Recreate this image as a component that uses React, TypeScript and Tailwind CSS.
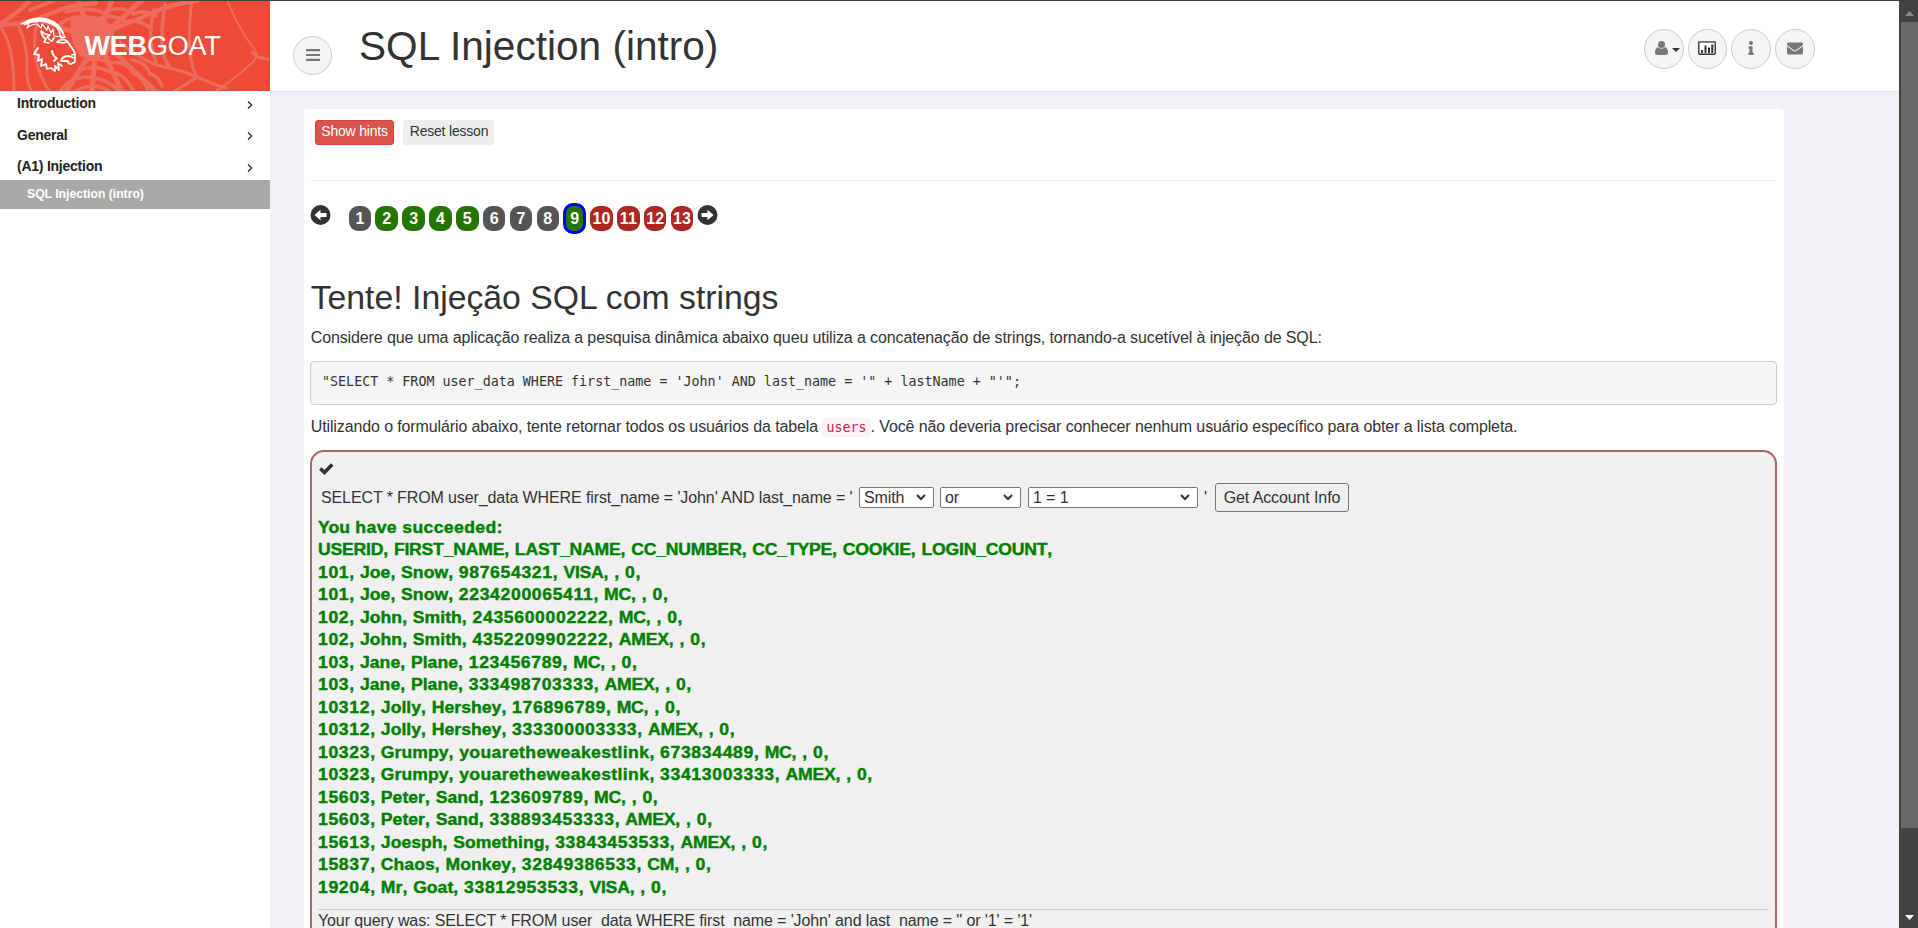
import { FaInfo, FaEnvelope } from 'react-icons/fa';

const menu = [
  { label: 'Introduction', row: 'h-[32px]', chevron: 'mt-[10px]' },
  { label: 'General', row: 'h-[31px]', chevron: 'mt-[9px]' },
  { label: '(A1) Injection', row: 'h-[26px]', chevron: 'mt-[10px]' },
];

const GREEN = 'h-[25px] rounded-[9px] leading-[25px] bg-[#257404]';
const GREY = 'h-[25px] rounded-[9px] leading-[25px] bg-[#555555]';
const RED = 'h-[25px] rounded-[9px] leading-[25px] bg-[#ae2823]';
const CURRENT = '-mt-[3px] h-[31px] rounded-[10px] border-3 border-[#0000ff] leading-[25px] bg-[#257404]';
const pages = [
  { n: 1, c: GREY }, { n: 2, c: GREEN }, { n: 3, c: GREEN }, { n: 4, c: GREEN }, { n: 5, c: GREEN },
  { n: 6, c: GREY }, { n: 7, c: GREY }, { n: 8, c: GREY }, { n: 9, c: CURRENT },
  { n: 10, c: RED }, { n: 11, c: RED }, { n: 12, c: RED }, { n: 13, c: RED },
];

const rows = [
  'You have succeeded:',
  'USERID, FIRST_NAME, LAST_NAME, CC_NUMBER, CC_TYPE, COOKIE, LOGIN_COUNT,',
  '101, Joe, Snow, 987654321, VISA, , 0,',
  '101, Joe, Snow, 2234200065411, MC, , 0,',
  '102, John, Smith, 2435600002222, MC, , 0,',
  '102, John, Smith, 4352209902222, AMEX, , 0,',
  '103, Jane, Plane, 123456789, MC, , 0,',
  '103, Jane, Plane, 333498703333, AMEX, , 0,',
  '10312, Jolly, Hershey, 176896789, MC, , 0,',
  '10312, Jolly, Hershey, 333300003333, AMEX, , 0,',
  '10323, Grumpy, youaretheweakestlink, 673834489, MC, , 0,',
  '10323, Grumpy, youaretheweakestlink, 33413003333, AMEX, , 0,',
  '15603, Peter, Sand, 123609789, MC, , 0,',
  '15603, Peter, Sand, 338893453333, AMEX, , 0,',
  '15613, Joesph, Something, 33843453533, AMEX, , 0,',
  '15837, Chaos, Monkey, 32849386533, CM, , 0,',
  '19204, Mr, Goat, 33812953533, VISA, , 0,',
];

function tracking(token: string) {
  if (/^\d/.test(token)) return 'tracking-[0.58px]';
  if (/^[a-z]/.test(token)) return 'tracking-[0.33px]';
  if (/^[A-Z][a-z]/.test(token)) return 'tracking-[0.02px]';
  if (/^[A-Z]/.test(token)) return 'tracking-[-0.2px]';
  return 'tracking-[0.42px]';
}

function ResultRow({ text }: { text: string }) {
  const tokens = text.match(/[A-Z_]+(?![a-z])|\w+|\W+/g) ?? [];
  return (
    <div className="origin-left scale-x-110 whitespace-pre">
      {tokens.map((t, i) => <span key={i} className={tracking(t)}>{t}</span>)}
    </div>
  );
}

function Web() {
  return (
    <svg className="absolute inset-0" width="270" height="90" viewBox="0 1 270 90" fill="none" stroke="#ef6b5c" strokeLinecap="round">
      <path d="M227 0Q239 30 255 50Q259 56 252 63Q236 78 213 93" strokeWidth="2" />
      <path d="M252 52Q258 59 270 59M120 42Q140 60 160 66Q185 71 197 77Q212 84 226 88M197 77L172 93" strokeWidth="3.2" />
      <path d="M192 0Q188 30 190 52Q191 66 197 77" strokeWidth="3" />
      <path d="M165 4Q161 30 162 45Q163 58 170 68M154 10Q150 25 151 40Q152 52 156 63" strokeWidth="3.6" />
      <path d="M0 25Q30 24 52 13Q70 5 96 3M0 24Q22 10 30 0M96 36L150 14Q168 5 198 0" strokeWidth="4.4" />
      <path d="M1 28Q14 45 14 92M18 25Q28 46 27 66Q26 82 32 92M38 20Q32 40 36 60Q40 78 50 92" strokeWidth="3" />
      <path d="M60 92Q68 78 86 77Q108 78 120 92M74 92Q84 86 96 86Q106 88 110 92M80 70Q96 64 110 72Q124 72 134 92M86 60Q98 57 110 63Q126 60 134 74Q142 76 148 90M132 60Q146 62 150 74Q158 76 162 86" strokeWidth="3.4" />
      <path d="M30 10Q46 4 60 -2M60 24Q76 12 96 20Q112 12 126 22Q138 18 150 28M66 12Q90 6 104 13Q120 4 134 14Q146 9 156 16" strokeWidth="3.6" />
      <path d="M92 40L78 0M96 40L112 0M98 40L142 0M96 40L40 20M96 44L92 92M96 44L66 92M100 44L122 92M104 42L156 92" strokeWidth="5" />
      <path d="M72 16Q100 12 112 26Q118 40 108 54Q94 62 80 56Q66 36 72 16Z" fill="#ef6b5c" stroke="none" />
    </svg>
  );
}

function Goat() {
  return (
    <svg className="absolute left-[20px] top-[16px]" width="58" height="58" viewBox="20 17 58 58" fill="none" stroke="#fff" strokeLinecap="round" strokeLinejoin="round">
      <path d="M21 24Q34 15 48 19Q62 23 65 38Q61 29 53 25Q44 20 35 22Q28 23 21 24Z" fill="#fff" strokeWidth=".8" />
      <path d="M24 25L29 23L27 28Q32 24 37 24L41 28L42 24L47 30L48 26L51 33L53 29L54 36Q59 37 62 36" strokeWidth="1.2" />
      <path d="M54 24Q60 30 61 38L65 37" strokeWidth="1.6" />
      <path d="M41 31L45 34L50 35L47 37L51 41M41 31Q42 37 46 39L44 42L49 43M54 38L52 41" strokeWidth="1.6" />
      <path d="M57 42Q62 38 67 41L74 51L75 54L72 55M75 54L75 62L71 64M57 42L63 43L67 42" strokeWidth="1.7" />
      <path d="M71 64Q68 64 68 61L61 61Q62 56 69 56L74 58" strokeWidth="1.8" />
      <path d="M38 48L34 54L39 55L38 61L42 59L41 66L46 64L47 69L51 68L55 71L55 66L59 70L58 63L62 66" strokeWidth="1.8" />
      <path d="M52 51Q53 57 57 58L54 61" strokeWidth="1.8" />
    </svg>
  );
}

function CircleArrow({ flip = false }: { flip?: boolean }) {
  return (
    <svg width="21" height="20" viewBox="0 0 21 20" className={flip ? 'rotate-180' : ''}>
      <circle cx="10.500" cy="10" r="10" fill="#333" />
      <path d="M4.500 10L10.500 4.800V8H16.500V12H10.500V15.200Z" fill="#fff" />
    </svg>
  );
}

function Select({ label, className }: { label: string; className: string }) {
  return (
    <div className={'flex h-[21px] items-center justify-between rounded-[2px] border border-[#767676] bg-white pl-[4px] pr-[7px] text-[16px] leading-[19px] ' + className}>
      <span>{label}</span>
      <svg width="10" height="7" viewBox="0 0 10 7" fill="none" stroke="#333" strokeWidth="2"><path d="M1 1l4 4 4-4" /></svg>
    </div>
  );
}

const round = 'relative flex items-center justify-center rounded-full border border-[#cccccc] bg-[#f5f5f5] pb-[2px] text-[#777777]';

export default function App() {
  return (
    <div className="flex h-[928px] w-[1918px] overflow-hidden border-t border-[#404040] bg-[#f0f1f7] font-['Liberation_Sans',Arial,sans-serif] text-[16px] text-[#333333]">
      <aside className="w-[270px] shrink-0 bg-white">
        <div className="relative h-[90px] overflow-hidden bg-[#ed4b38]">
          <Web />
          <Goat />
          <div className="relative pl-[84.500px] pt-[29px] text-[27px] leading-[32px] tracking-[-0.2px] text-white"><b>WEB</b>GOAT</div>
        </div>
        <nav className="text-[14px] tracking-[-0.24px] font-bold text-[#222222]">
          {menu.map((m) => (
            <div key={m.label} className={'flex items-start justify-between pl-[17px] pr-[17px] leading-[25px] ' + m.row}>
              <span>{m.label}</span>
              <svg className={m.chevron} width="6" height="8" viewBox="0 0 6 8" fill="none" stroke="#222" strokeWidth="1.2"><path d="M1 .5L4.700 4L1 7.500" /></svg>
            </div>
          ))}
        </nav>
        <div className="h-[29px] bg-[#a9a9a9] pl-[27px] text-[12.200px] leading-[28px] font-bold text-white">SQL Injection (intro)</div>
      </aside>

      <div className="flex w-[1629px] shrink-0 flex-col">
        <header className="flex h-[91px] shrink-0 items-start border-b border-[#e4e5ea] bg-white pl-[23px]">
          <div className={round + ' mt-[35px] h-[39px] w-[39px]'}>
            <svg width="14" height="12" viewBox="0 0 14 12" fill="#777"><path d="M0 0h14v2.200H0zM0 4.900h14v2.200H0zM0 9.800h14v2.200H0z" /></svg>
          </div>
          <h1 className="ml-[27px] mt-[21px] w-[1285px] text-[40.600px] leading-[48px]">SQL Injection (intro)</h1>
          <div className="mt-[28px] flex gap-[4.200px]">
            <div className={round + ' h-10 w-[39.500px]'}>
              <svg className="mr-[4px]" width="13" height="14" viewBox="0 0 13 14" fill="#777"><circle cx="6.500" cy="3.500" r="3.500" /><path d="M3 6.300Q6.500 9 10 6.300Q13 7 13 12Q13 14 10.800 14H2.200Q0 14 0 12Q0 7 3 6.300Z" /></svg>
              <svg className="absolute right-[2.500px] top-[17.500px]" width="8" height="4" viewBox="0 0 8 4"><path d="M0 0h8L4 4z" fill="#333" /></svg>
            </div>
            <div className={round + ' h-10 w-[39.500px]'}>
              <svg width="18" height="14" viewBox="0 0 18 14"><rect x=".75" y=".75" width="16.500" height="12.500" rx="1" fill="#fff" stroke="#333" strokeWidth="1.400" /><path d="M.5 .8H17.500" stroke="#777" strokeWidth="1.500" /><path d="M4 12V9M7.500 12V4.500M11 12V6.500M14.300 12V3.500" stroke="#333" strokeWidth="2" /></svg>
            </div>
            <div className={round + ' h-10 w-[39.500px]'}><FaInfo className="h-[14px] w-[8px]" /></div>
            <div className={round + ' h-10 w-[39.500px]'}><FaEnvelope className="h-[17px] w-[16px]" /></div>
          </div>
        </header>

        <main className="ml-[34px] mt-[17px] h-[830px] w-[1480px] rounded-t-[4px] bg-white pl-[6px] pr-[7px]">
          <div className="flex h-[72px] gap-[9px] rounded-b-[4px] border-b border-[#eeeeee] pl-[5px] pt-[11px] text-[14px] tracking-[-0.2px]">
            <div className="h-[25px] w-[79px] rounded-[3px] border border-[#d43f3a] bg-[#d9534f] text-center leading-[21px] text-white">Show hints</div>
            <div className="h-[25px] w-[91px] rounded-[3px] bg-[#eeeeee] pl-px text-center leading-[23px]">Reset lesson</div>
          </div>

          <div className="mt-[24px] flex h-[26px] items-start">
            <CircleArrow />
            <div className="ml-[17.600px] mt-px flex gap-[4.250px]">
              {pages.map((p) => (
                <div key={p.n} className={'flex w-[22.600px] justify-center text-[16px] font-bold text-white ' + p.c}>{p.n}</div>
              ))}
            </div>
            <div className="ml-[4px]"><CircleArrow flip /></div>
          </div>

          <h2 className="ml-[0.700px] mt-[46px] h-[40px] text-[33.750px] leading-[40px]">Tente! Injeção SQL com strings</h2>
          <p className="ml-[0.700px] mt-[10px] h-[22px] leading-[22px] tracking-[-0.115px] whitespace-nowrap">Considere que uma aplicação realiza a pesquisa dinâmica abaixo queu utiliza a concatenação de strings, tornando-a sucetível à injeção de SQL:</p>
          <pre className="mt-[12px] h-[44px] rounded-[4px] border border-[#cccccc] bg-[#f5f5f5] pl-[11px] font-['DejaVu_Sans_Mono',monospace] text-[13.350px] leading-[40px]">{`"SELECT * FROM user_data WHERE first_name = 'John' AND last_name = '" + lastName + "'";`}</pre>
          <p className="ml-[0.700px] mt-[11px] h-[22px] leading-[22px] tracking-[-0.115px] whitespace-nowrap">
            Utilizando o formulário abaixo, tente retornar todos os usuários da tabela{' '}
            <code className="rounded-[4px] bg-[#f9f2f4] px-[4px] py-[2px] font-['DejaVu_Sans_Mono',monospace] text-[13.350px] tracking-normal text-[#c7254e]">users</code>
            . Você não deveria precisar conhecer nenhum usuário específico para obter a lista completa.
          </p>

          <section className="mt-[12px] h-[600px] rounded-[14px] border-2 border-[#aa6666] bg-[#f0f0f0] px-[6px] pt-[10px]">
            <svg className="ml-px" width="15" height="14" viewBox="0 0 15 14" fill="none" stroke="#333" strokeWidth="3.600"><path d="M1.300 6.500L5.500 10.500L13.200 2.600" /></svg>
            <div className="mt-[7px] flex h-[29px] items-center pl-[3px] tracking-[-0.11px] whitespace-nowrap">
              <span className="w-[538px]">SELECT * FROM user_data WHERE first_name = 'John' AND last_name = '</span>
              <Select label="Smith" className="w-[75px]" />
              <Select label="or" className="ml-[6px] w-[81px]" />
              <Select label="1 = 1" className="ml-[7px] w-[170px]" />
              <span className="ml-[6px] w-[11px]">'</span>
              <div className="h-[29px] w-[134px] rounded-[3px] border border-[#767676] bg-[#efefef] text-center leading-[27px]">Get Account Info</div>
            </div>
            <div className="mt-[4.500px] font-bold leading-[22.500px] text-[#008000] [-webkit-text-stroke:0.4px_#008000]">
              {rows.map((r, i) => <ResultRow key={i} text={r} />)}
            </div>
            <div className="mt-[9.500px] border-t border-[#cccccc] leading-[22px] tracking-[-0.12px]">Your query was: SELECT * FROM user_data WHERE first_name = 'John' and last_name = '' or '1' = '1'</div>
          </section>
        </main>
      </div>

      <div className="flex w-[19px] shrink-0 flex-col items-center justify-between bg-[#424242] pl-[2px]">
        <div className="flex h-[21px] shrink-0 items-center"><svg width="9" height="5" className="mt-[3px]"><path d="M0 5L4.500 0L9 5z" fill="#8a8a8a" /></svg></div>
        <div className="h-[806px] w-full shrink-0 bg-[#686868]" />
        <div className="flex h-[100px] items-end pb-[8px]"><svg width="9" height="5"><path d="M0 0h9L4.500 5z" fill="#fff" /></svg></div>
      </div>
    </div>
  );
}
